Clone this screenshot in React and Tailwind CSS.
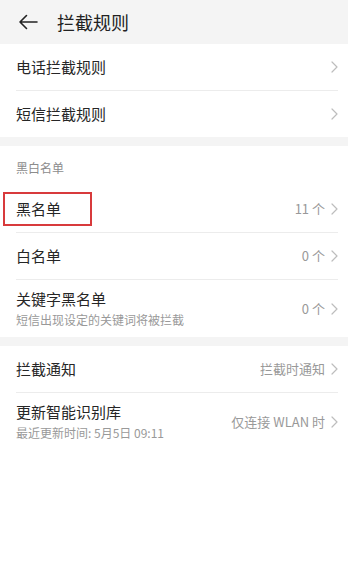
import React from 'react'

const Chevron = () => (
  <svg width="7" height="12" viewBox="0 0 7 12" className="shrink-0">
    <path d="M1 1l5 5-5 5" fill="none" stroke="#bdbdbd" strokeWidth="1.2" strokeLinecap="round" strokeLinejoin="round" />
  </svg>
)

const Row = ({ title, sub, value, divider, highlight }) => (
  <div className="relative pl-4 pr-[10px]">
    <div className={`flex items-center justify-between ${sub ? 'h-[57px]' : 'h-[46px]'}`}>
      <div className="flex flex-col">
        <span className="text-[15px] leading-5 text-[#262626]">{title}</span>
        {sub && <span className="text-[12px] leading-4 mt-[3px] text-[#999]">{sub}</span>}
      </div>
      <div className="flex items-center gap-[6px]">
        {value && <span className="text-[13px] text-[#999]">{value}</span>}
        <Chevron />
      </div>
    </div>
    {divider && <div className="h-px bg-[#ececec]" />}
    {highlight && (
      <div className="absolute left-[3px] top-[6px] w-[89px] h-[34px] border-2 border-[#d83a3c]" />
    )}
  </div>
)

export default function App() {
  return (
    <div className="w-[348px] h-[561px] bg-[#f4f4f4] flex flex-col" style={{ fontFamily: '"Noto Sans CJK SC", "Noto Sans", sans-serif' }}>
      {/* Header */}
      <div className="h-[44px] flex items-center shrink-0">
        <svg width="20" height="16" viewBox="0 0 20 16" className="ml-[18px]">
          <path d="M19 8H2M8.5 1.5L2 8l6.5 6.5" fill="none" stroke="#222" strokeWidth="1.6" strokeLinecap="round" strokeLinejoin="round" />
        </svg>
        <span className="ml-[19px] text-[18px] text-[#222]">拦截规则</span>
      </div>

      <div className="bg-white">
        <Row title="电话拦截规则" divider />
        <Row title="短信拦截规则" />
      </div>

      <div className="h-[9px] shrink-0" />

      <div className="bg-white">
        <div className="h-[40px] pl-4 flex items-end pb-[9px]">
          <span className="text-[12px] text-[#8c8c8c]">黑白名单</span>
        </div>
        <Row title="黑名单" value="11 个" divider highlight />
        <Row title="白名单" value="0 个" divider />
        <Row title="关键字黑名单" sub="短信出现设定的关键词将被拦截" value="0 个" />
      </div>

      <div className="h-[9px] shrink-0" />

      <div className="bg-white flex-1">
        <Row title="拦截通知" value="拦截时通知" divider />
        <Row title="更新智能识别库" sub="最近更新时间: 5月5日 09:11" value="仅连接 WLAN 时" />
      </div>
    </div>
  )
}
